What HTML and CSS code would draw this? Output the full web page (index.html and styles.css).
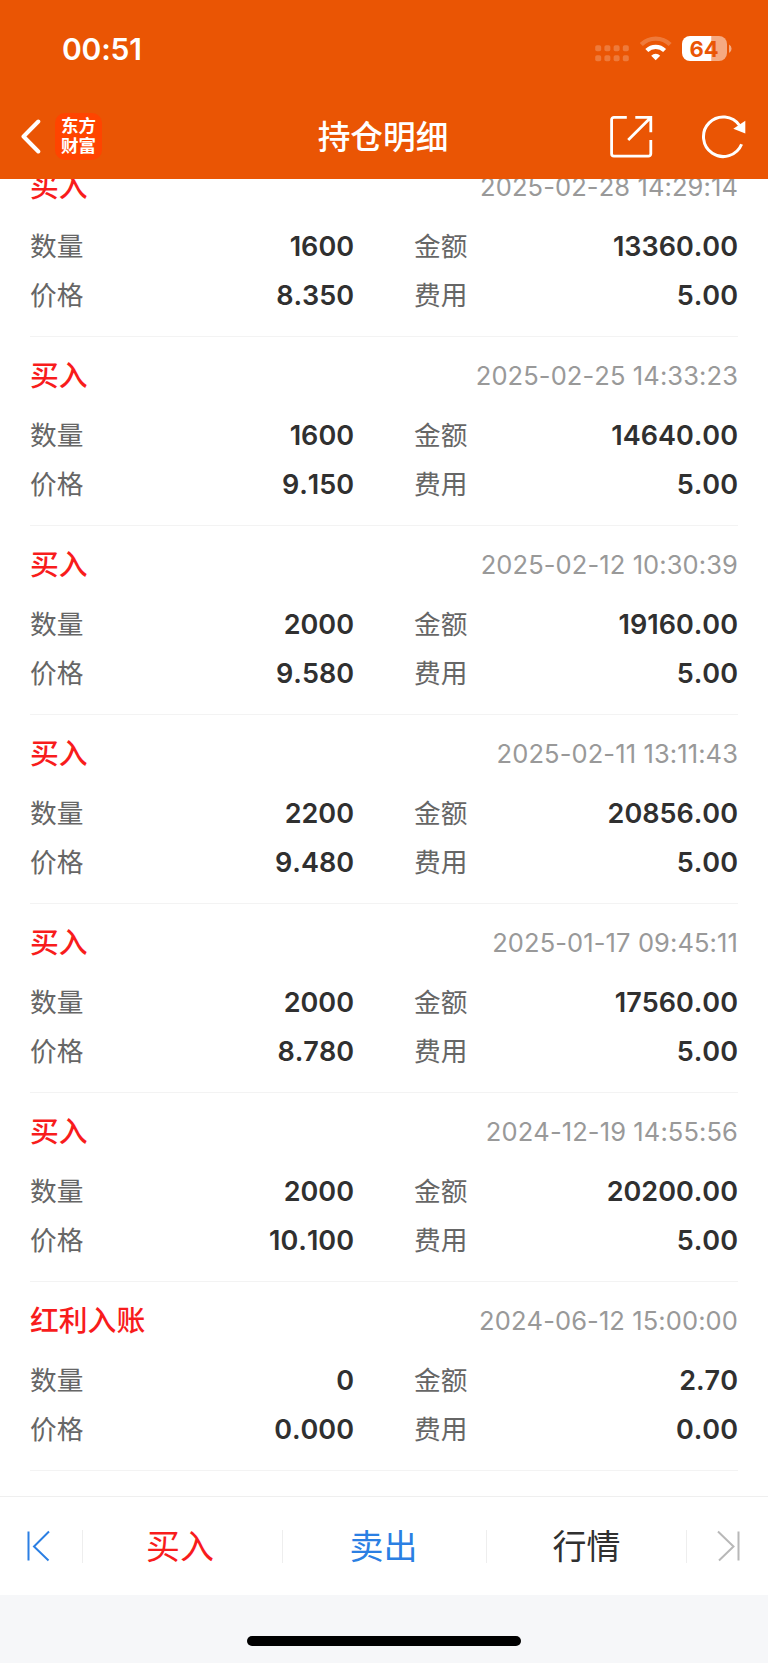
FILE: index.html
```html
<!DOCTYPE html>
<html lang="zh-CN">
<head>
  <meta charset="UTF-8" />
  <title>持仓明细</title>
  <link rel="stylesheet" href="styles.css">
</head>
<body>

  <header class="header">
    <div class="status">
      <span class="time">00:51</span>
      <svg class="status-icons" width="138" height="30" viewBox="594 34 138 30">
        <!-- sinal -->
        <g fill="#fff" fill-opacity="0.22">
          <rect x="595.2" y="45.3" width="6" height="6" rx="1.8"/>
          <rect x="604.4" y="45.3" width="6" height="6" rx="1.8"/>
          <rect x="613.6" y="45.3" width="6" height="6" rx="1.8"/>
          <rect x="622.8" y="45.3" width="6" height="6" rx="1.8"/>
          <rect x="595.2" y="55.2" width="6" height="6" rx="1.8"/>
          <rect x="604.4" y="55.2" width="6" height="6" rx="1.8"/>
          <rect x="613.6" y="55.2" width="6" height="6" rx="1.8"/>
          <rect x="622.8" y="55.2" width="6" height="6" rx="1.8"/>
        </g>
        <!-- wifi -->
        <path d="M641.3 44.5a20.5 20.5 0 0 1 28.8 0" fill="none" stroke="#fff" stroke-opacity="0.22" stroke-width="4.4"/>
        <path d="M646.8 50.6a12.6 12.6 0 0 1 17.8 0" fill="none" stroke="#fff" stroke-width="4.2"/>
        <path d="M655.7 60.2l-4.5-4.5a6.4 6.4 0 0 1 9 0z" fill="#fff"/>
        <!-- bateria -->
        <path d="M711.5 36H719a8 8 0 0 1 8 8v9a8 8 0 0 1-8 8h-7.5z" fill="#fff" fill-opacity="0.5"/>
        <path d="M711.5 36H690a8 8 0 0 0-8 8v9a8 8 0 0 0 8 8h21.5z" fill="#fff"/>
        <path d="M729 44.5q2.6 1.4 2.6 4.2t-2.6 4.2z" fill="#fff" fill-opacity="0.5"/>
        <text class="battery-text" x="704" y="56.6" text-anchor="middle">64</text>
      </svg>
    </div>
    <div class="navbar">
      <div class="nav-left">
        <svg width="22" height="38" viewBox="0 0 22 38" fill="none" stroke="#fff" stroke-width="4" stroke-linecap="round" stroke-linejoin="round">
          <path d="M19.3 3.5L4.5 18.5L19.3 33.5"/>
        </svg>
        <div class="logo"><span>东方</span><span>财富</span></div>
      </div>
      <h1>持仓明细</h1>
      <div class="nav-right">
        <svg width="44" height="44" viewBox="609 115 44 44" fill="none" stroke="#fff" stroke-width="2.8">
          <path d="M626.8 117.4H614a2.4 2.4 0 0 0-2.4 2.4v34a2.4 2.4 0 0 0 2.4 2.4h34.4a2.4 2.4 0 0 0 2.4-2.4V140"/>
          <path d="M635.3 117.4h15.5v14.9M650 118.2L628.2 140"/>
        </svg>
        <svg width="46" height="46" viewBox="701 114 46 46">
          <path d="M741.6 144.3A19.8 19.8 0 1 1 739.6 125.5" fill="none" stroke="#fff" stroke-width="3"/>
          <path d="M745.3 120.8v12.6l-12-4.6z" fill="#fff"/>
        </svg>
      </div>
    </div>
  </header>

  <main class="list">
    <section class="record">
      <div class="record-head"><h2>买入</h2><time>2025-02-28 14:29:14</time></div>
      <dl>
        <div><dt>数量</dt><dd>1600</dd></div>
        <div><dt>金额</dt><dd>13360.00</dd></div>
        <div><dt>价格</dt><dd>8.350</dd></div>
        <div><dt>费用</dt><dd>5.00</dd></div>
      </dl>
    </section>
    <section class="record">
      <div class="record-head"><h2>买入</h2><time>2025-02-25 14:33:23</time></div>
      <dl>
        <div><dt>数量</dt><dd>1600</dd></div>
        <div><dt>金额</dt><dd>14640.00</dd></div>
        <div><dt>价格</dt><dd>9.150</dd></div>
        <div><dt>费用</dt><dd>5.00</dd></div>
      </dl>
    </section>
    <section class="record">
      <div class="record-head"><h2>买入</h2><time>2025-02-12 10:30:39</time></div>
      <dl>
        <div><dt>数量</dt><dd>2000</dd></div>
        <div><dt>金额</dt><dd>19160.00</dd></div>
        <div><dt>价格</dt><dd>9.580</dd></div>
        <div><dt>费用</dt><dd>5.00</dd></div>
      </dl>
    </section>
    <section class="record">
      <div class="record-head"><h2>买入</h2><time>2025-02-11 13:11:43</time></div>
      <dl>
        <div><dt>数量</dt><dd>2200</dd></div>
        <div><dt>金额</dt><dd>20856.00</dd></div>
        <div><dt>价格</dt><dd>9.480</dd></div>
        <div><dt>费用</dt><dd>5.00</dd></div>
      </dl>
    </section>
    <section class="record">
      <div class="record-head"><h2>买入</h2><time>2025-01-17 09:45:11</time></div>
      <dl>
        <div><dt>数量</dt><dd>2000</dd></div>
        <div><dt>金额</dt><dd>17560.00</dd></div>
        <div><dt>价格</dt><dd>8.780</dd></div>
        <div><dt>费用</dt><dd>5.00</dd></div>
      </dl>
    </section>
    <section class="record">
      <div class="record-head"><h2>买入</h2><time>2024-12-19 14:55:56</time></div>
      <dl>
        <div><dt>数量</dt><dd>2000</dd></div>
        <div><dt>金额</dt><dd>20200.00</dd></div>
        <div><dt>价格</dt><dd>10.100</dd></div>
        <div><dt>费用</dt><dd>5.00</dd></div>
      </dl>
    </section>
    <section class="record">
      <div class="record-head"><h2>红利入账</h2><time>2024-06-12 15:00:00</time></div>
      <dl>
        <div><dt>数量</dt><dd>0</dd></div>
        <div><dt>金额</dt><dd>2.70</dd></div>
        <div><dt>价格</dt><dd>0.000</dd></div>
        <div><dt>费用</dt><dd>0.00</dd></div>
      </dl>
    </section>
  </main>

  <nav class="tabs">
    <a class="tab tab-prev">
      <svg width="24" height="32" viewBox="0 0 24 32" fill="none" stroke="#2b7fe3" stroke-width="2">
        <path d="M2.5 1.5v29M23 1.5L8 16.5L22.5 30.5"/>
      </svg>
    </a>
    <a class="tab buy">买入</a>
    <a class="tab sell">卖出</a>
    <a class="tab quote">行情</a>
    <a class="tab tab-next">
      <svg width="24" height="32" viewBox="0 0 24 32" fill="none" stroke="#b8b8b8" stroke-width="2">
        <path d="M21.5 1.5v29M1 1.5L16.5 16.5L2 30.5"/>
      </svg>
    </a>
  </nav>

  <footer class="home"><div class="home-bar"></div></footer>

</body>
</html>
```
FILE: styles.css
```css
* {
  box-sizing: border-box;
  margin: 0;
  padding: 0;
}

body {
  display: flex;
  flex-direction: column;
  height: 1663px;
  overflow: hidden;
  background: #fff;
  font-family: Inter, "Noto Sans CJK SC", sans-serif;
  font-kerning: none;
}

/* topo */
.header {
  height: 179px;
  flex: none;
  background: #ea5504;
  color: #fff;
}

.status {
  display: flex;
  justify-content: space-between;
  align-items: center;
  height: 98px;
  padding: 0 36px 0 62px;
}

.time {
  font-size: 30px;
  font-weight: 600;
  letter-spacing: -0.2px;
}

.battery-text {
  font-size: 22px;
  font-weight: 700;
  fill: #ea5504;
}

.navbar {
  display: grid;
  grid-template-columns: 1fr auto 1fr;
  align-items: center;
  height: 77px;
  padding: 0 21px 0 19px;
}

.nav-left {
  display: flex;
  align-items: center;
  gap: 14px;
}

.logo {
  display: flex;
  flex-direction: column;
  justify-content: center;
  align-items: center;
  width: 47px;
  height: 47px;
  padding-bottom: 2px;
  border-radius: 10px;
  background: #ff4400;
  font-size: 17.5px;
  font-weight: 700;
  line-height: 19.5px;
}

h1 {
  font-size: 32.7px;
  font-weight: 500;
  line-height: 40px;
}

.nav-right {
  display: flex;
  justify-content: flex-end;
  align-items: center;
  gap: 48px;
}

/* lista */
.list {
  display: flex;
  flex-direction: column;
  justify-content: flex-end;
  height: 1317px;
  flex: none;
  overflow: hidden;
  padding: 0 30px 25px;
}

.record {
  flex: none;
  height: 189px;
  padding-top: 20px;
  border-bottom: 1px solid #f3f3f3;
}

.record-head {
  display: flex;
  justify-content: space-between;
  height: 40px;
  margin-bottom: 14px;
}

h2 {
  font-size: 28.8px;
  font-weight: 500;
  line-height: 38px;
  color: #f81c1c;
}

time {
  font-size: 25.5px;
  line-height: 38px;
  letter-spacing: 0.1px;
  color: #999;
}

dl {
  display: grid;
  grid-template-columns: 1fr 1fr;
  column-gap: 60px;
}

dl div {
  display: flex;
  justify-content: space-between;
  height: 49px;
}

dt {
  font-size: 26.7px;
  font-weight: 400;
  line-height: 48px;
  color: #666;
}

dd {
  font-size: 27px;
  font-weight: 600;
  line-height: 50px;
  color: #303030;
}

/* barra inferior */
.tabs {
  display: flex;
  align-items: center;
  height: 99px;
  flex: none;
  border-top: 1px solid #efefef;
}

.tab {
  display: flex;
  justify-content: center;
  align-items: center;
  height: 33px;
  padding-bottom: 4px;
  border-left: 1px solid #eee;
  font-size: 34px;
}

.tab-prev {
  width: 82px;
  justify-content: flex-start;
  padding: 0 0 0 26px;
  border-left: none;
}

.tab-next {
  width: 82px;
  justify-content: flex-end;
  padding: 0 27px 0 0;
}

.buy {
  width: 200px;
  padding-right: 5px;
  color: #f81c1c;
}

.sell {
  width: 204px;
  padding-right: 2px;
  color: #2b7fe3;
}

.quote {
  width: 200px;
  color: #303030;
}

.home {
  height: 68px;
  flex: none;
  padding-top: 41px;
  background: #f6f7f9;
}

.home-bar {
  width: 274px;
  height: 10px;
  margin: 0 auto;
  border-radius: 5px;
  background: #000;
}
```
